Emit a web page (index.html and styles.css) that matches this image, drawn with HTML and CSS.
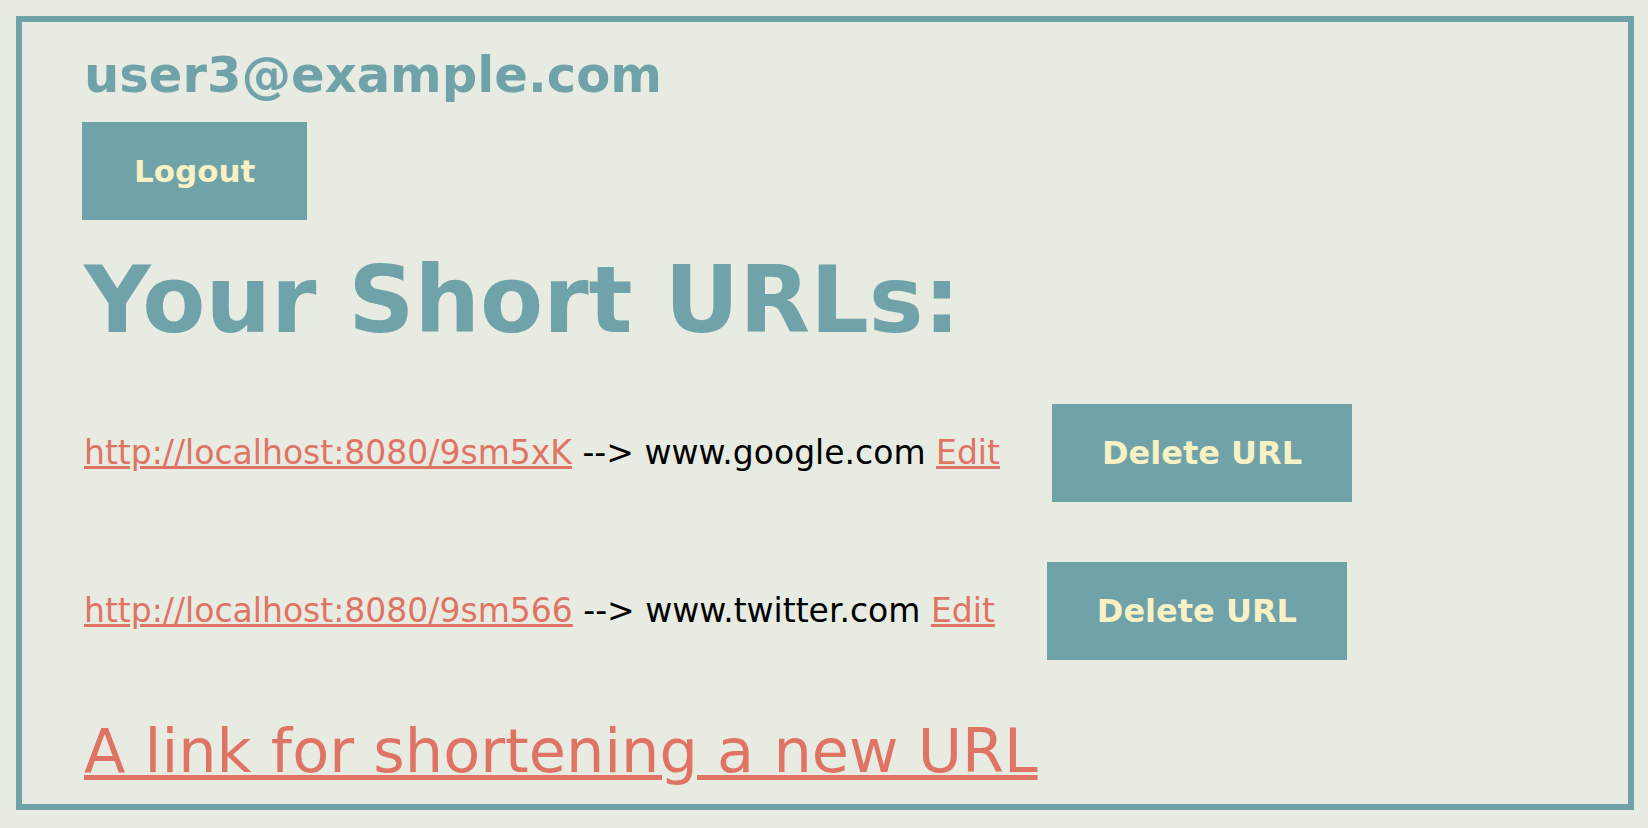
FILE: index.html
```html
<!DOCTYPE html>
<html>
<head>
<meta charset="utf-8">
<title>Your Short URLs</title>
<link rel="stylesheet" href="styles.css">
</head>
<body>
<main class="frame">
  <h2 class="user">user3@example.com</h2>
  <button class="btn logout">Logout</button>
  <h1 class="title">Your Short URLs:</h1>
  <div class="row">
    <span class="entry"><a href="#" class="link">http://localhost:8080/9sm5xK</a> --&gt; www.google.com <a href="#" class="link">Edit</a></span>
    <button class="btn delete">Delete URL</button>
  </div>
  <div class="row">
    <span class="entry"><a href="#" class="link">http://localhost:8080/9sm566</a> --&gt; www.twitter.com <a href="#" class="link">Edit</a></span>
    <button class="btn delete">Delete URL</button>
  </div>
  <a href="#" class="link new-link">A link for shortening a new URL</a>
</main>
</body>
</html>
```

FILE: styles.css
```css
html, body {
  margin: 0;
  padding: 0;
  background: #e8ebe2;
}

body {
  font-family: "DejaVu Sans", Verdana, sans-serif;
  padding: 16px 14px 18px 16px;
}

.frame {
  display: flex;
  flex-direction: column;
  align-items: flex-start;
  border: 6px solid #6fa3a9;
  padding: 24px 0 18px 62px;
  height: 794px;
  box-sizing: border-box;
}

.user {
  margin: 0;
  font-size: 49.6px;
  font-weight: bold;
  color: #6fa3a9;
  line-height: 58px;
}

.btn {
  border: none;
  background: #6fa3a9;
  color: #f8f1c4;
  font-family: "DejaVu Sans", Verdana, sans-serif;
  font-weight: bold;
  font-size: 31px;
  line-height: 36px;
  padding: 31px 52px;
  cursor: pointer;
}

.logout {
  margin: 18px 0 0 -2px;
}

.title {
  margin: 28px 0 0;
  font-size: 92px;
  font-weight: bold;
  color: #6fa3a9;
  line-height: 106px;
}

.row {
  display: flex;
  align-items: center;
  margin-top: 50px;
}

.row + .row {
  margin-top: 60px;
}

.entry {
  font-size: 33px;
  color: #000;
  line-height: 38px;
}

.link {
  color: #e07464;
  text-decoration: underline;
}

.delete {
  margin-left: 52px;
  font-size: 32px;
  padding: 31px 50px;
}

.new-link {
  margin-top: 56px;
  font-size: 60.5px;
  line-height: 70px;
  text-decoration-thickness: 5px;
}
```
